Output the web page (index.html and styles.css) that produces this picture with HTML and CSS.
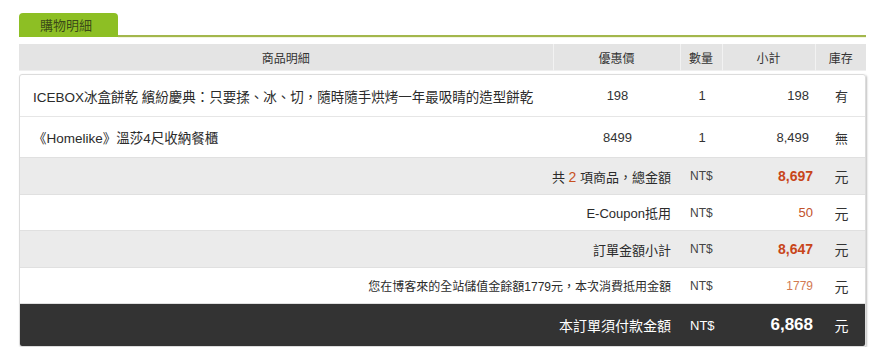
FILE: index.html
```html
<!DOCTYPE html>
<html lang="zh-Hant">
<head>
<meta charset="utf-8">
<title>購物明細</title>
<link rel="stylesheet" href="styles.css">
</head>
<body>
<div class="cart">
  <div class="tabbar">
    <div class="tab">購物明細</div>
    <div class="tabline"></div>
  </div>

  <table class="grid head">
    <colgroup>
      <col class="c-name"><col class="c-price"><col class="c-qty"><col class="c-sub"><col class="c-stock">
    </colgroup>
    <tr>
      <th>商品明細</th>
      <th>優惠價</th>
      <th>數量</th>
      <th>小計</th>
      <th>庫存</th>
    </tr>
  </table>

  <div class="box">
    <table class="grid items">
      <colgroup>
        <col class="c-name"><col class="c-price"><col class="c-qty"><col class="c-sub"><col class="c-stock">
      </colgroup>
      <tr class="item first">
        <td class="name">ICEBOX冰盒餅乾 繽紛慶典：只要揉、冰、切，隨時隨手烘烤一年最吸睛的造型餅乾</td>
        <td class="center">198</td>
        <td class="center">1</td>
        <td class="right">198</td>
        <td class="center stock">有</td>
      </tr>
      <tr class="item">
        <td class="name">《Homelike》溫莎4尺收納餐櫃</td>
        <td class="center">8499</td>
        <td class="center">1</td>
        <td class="right">8,499</td>
        <td class="center stock">無</td>
      </tr>
      <tr class="sum gray">
        <td class="label" colspan="2">共 <span class="hl">2</span> 項商品，總金額</td>
        <td class="cur">NT$</td>
        <td class="amt strong">8,697</td>
        <td class="center unit">元</td>
      </tr>
      <tr class="sum">
        <td class="label" colspan="2">E-Coupon抵用</td>
        <td class="cur">NT$</td>
        <td class="amt">50</td>
        <td class="center unit">元</td>
      </tr>
      <tr class="sum gray">
        <td class="label" colspan="2">訂單金額小計</td>
        <td class="cur">NT$</td>
        <td class="amt strong">8,647</td>
        <td class="center unit">元</td>
      </tr>
      <tr class="sum">
        <td class="label small" colspan="2">您在博客來的全站儲值金餘額1779元，本次消費抵用金額</td>
        <td class="cur">NT$</td>
        <td class="amt light">1779</td>
        <td class="center unit">元</td>
      </tr>
      <tr class="total">
        <td class="label" colspan="2">本訂單須付款金額</td>
        <td class="cur">NT$</td>
        <td class="amt">6,868</td>
        <td class="center unit">元</td>
      </tr>
    </table>
  </div>
</div>
</body>
</html>
```

FILE: styles.css
```css
html, body {
  margin: 0;
  padding: 0;
  background: #ffffff;
}

body {
  font-family: "Liberation Sans", Arial, "Noto Sans CJK TC", sans-serif;
  color: #333333;
  font-size: 13px;
}

.cart {
  padding: 13px 9px 0 19px;
}

.tabbar {
  display: flex;
  align-items: flex-end;
}

.tab {
  width: 99px;
  height: 24px;
  box-sizing: border-box;
  padding-left: 21px;
  background: #8dbf24;
  border-radius: 4px 4px 0 0;
  font-size: 13px;
  line-height: 25px;
  color: #3b4a18;
}

.tabline {
  flex: 1;
  height: 2px;
  background: #a3b74c;
  box-shadow: 0 1px 0 #f3f5df;
}

.grid {
  width: 847px;
  border-collapse: collapse;
  table-layout: fixed;
}

.c-name { width: 534px; }
.c-price { width: 127px; }
.c-qty { width: 42px; }
.c-sub { width: 93px; }
.c-stock { width: 51px; }

.head {
  margin-top: 7px;
  background: #e4e4e4;
  border-bottom: 1px solid #efefef;
}

.head th {
  height: 26px;
  padding: 0;
  font-weight: normal;
  font-size: 12px;
  color: #333333;
  border-left: 1px solid #f2f2f2;
  text-align: center;
}

.head th:first-child {
  border-left: none;
}

.box {
  margin-top: 3px;
  width: 845px;
  border: 1px solid #dcdcdc;
  border-radius: 3px;
  box-shadow: 1px 1px 2px rgba(0, 0, 0, 0.25);
  overflow: hidden;
}

.items {
  width: 845px;
}

.items td {
  padding: 0;
  vertical-align: middle;
}

.item td {
  height: 40px;
  border-top: 1px solid #e6e6e6;
  font-size: 13px;
}

.item.first td {
  border-top: none;
  height: 41px;
}

.item td.name {
  padding-left: 13px;
  font-size: 13.5px;
  white-space: nowrap;
  color: #2b2b2b;
}

.center { text-align: center; }
.right { text-align: right; padding-right: 7px !important; }

.stock,
.unit {
  font-size: 14px;
}

.sum td {
  height: 35px;
  border-top: 1px solid #e0e0e0;
}

.sum.gray td {
  background: #ebebeb;
  height: 36px;
}

.sum td.label {
  text-align: right;
  padding-right: 10px;
  font-size: 13px;
  color: #2b2b2b;
}

.sum td.label.small {
  font-size: 12px;
}

.hl {
  color: #c8501f;
  font-size: 14px;
}

.cur {
  padding-left: 9px !important;
  font-size: 12px;
  color: #444444;
}

.amt {
  text-align: right;
  padding-right: 3px !important;
  color: #c2522a;
  font-size: 13px;
}

.amt.strong {
  font-weight: bold;
  font-size: 14px;
  color: #c8451a;
}

.amt.light {
  color: #d27a52;
  font-size: 12px;
}

.total td {
  height: 42px;
  background: #333333;
  color: #ffffff;
  border-top: 1px solid #e0e0e0;
}

.total td.label {
  text-align: right;
  padding-right: 10px;
  font-size: 14px;
}

.total .cur {
  color: #ffffff;
  font-size: 13px;
}

.total .amt {
  color: #ffffff;
  font-weight: bold;
  font-size: 17px;
  padding-right: 3px !important;
}
```
